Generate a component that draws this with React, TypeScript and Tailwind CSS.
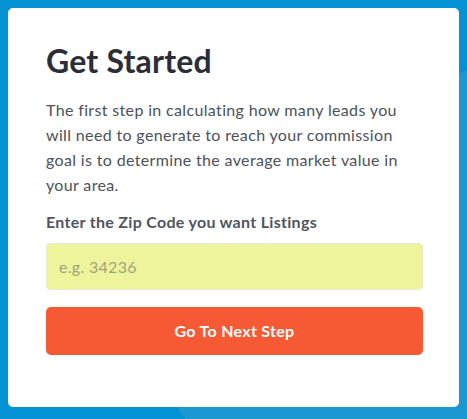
import React from "react";

export default function App() {
  return (
    <div
      className="relative w-[467px] h-[419px] overflow-hidden bg-[#0592d4]"
      style={{ fontFamily: "Lato, 'Noto Sans', sans-serif" }}
    >
      <svg
        className="absolute inset-0"
        width="467"
        height="419"
        viewBox="0 0 467 419"
      >
        <polygon points="60,232 467,70 467,419 185,419" fill="#1b97d1" />
      </svg>
      <div className="relative pt-2 pl-2 pr-2 pb-3 h-full">
        <div className="h-full w-[451px] bg-white rounded-[5px] px-[38px] pt-[33px]">
          <h1 className="text-[32px] leading-[40px] font-bold text-[#2b2e38] tracking-[0.2px]">
            Get Started
          </h1>
          <p className="mt-[16px] text-[16px] leading-[25px] text-[#4d515c] tracking-[0.35px]">
            The first step in calculating how many leads you
            <br />
            will need to generate to reach your commission
            <br />
            goal is to determine the average market value in
            <br />
            your area.
          </p>
          <label className="block mt-[12px] text-[16px] leading-[25px] font-bold text-[#51555f] tracking-[0.3px]">
            Enter the Zip Code you want Listings
          </label>
          <input
            type="text"
            placeholder="e.g. 34236"
            className="mt-[9px] block w-[377px] h-[47px] rounded-[4px] border border-[#e8ebd0] bg-[#eef49b] px-[12px] text-[16px] tracking-[0.3px] text-[#333] placeholder:text-[#a0a47c] outline-none"
          />
          <button className="mt-[17px] w-[377px] h-[48px] rounded-[5px] bg-[#f65a35] text-white text-[16px] font-bold tracking-[0.3px]">
            Go To Next Step
          </button>
        </div>
      </div>
    </div>
  );
}
